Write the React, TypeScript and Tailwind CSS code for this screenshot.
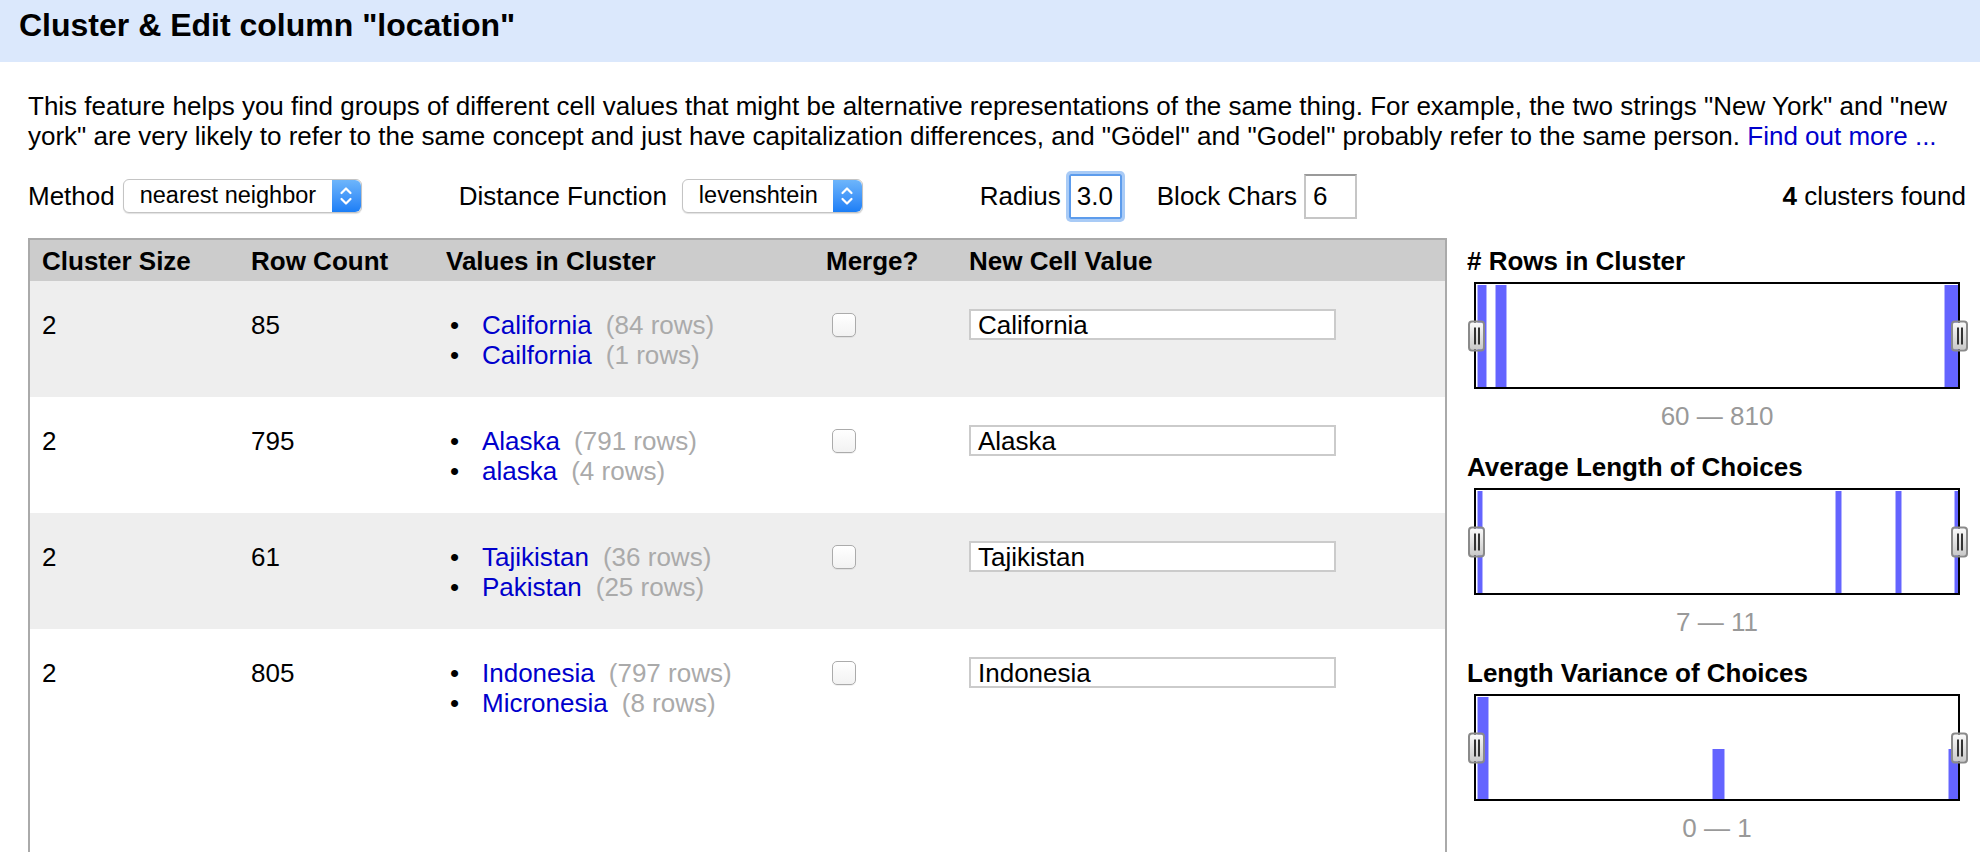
import React from "react";

type Cluster = {
  size: number;
  count: number;
  values: [string, number][];
  newValue: string;
};

const clusters: Cluster[] = [
  { size: 2, count: 85, values: [["California", 84], ["Cailfornia", 1]], newValue: "California" },
  { size: 2, count: 795, values: [["Alaska", 791], ["alaska", 4]], newValue: "Alaska" },
  { size: 2, count: 61, values: [["Tajikistan", 36], ["Pakistan", 25]], newValue: "Tajikistan" },
  { size: 2, count: 805, values: [["Indonesia", 797], ["Micronesia", 8]], newValue: "Indonesia" },
];

type Bar = { x: number; w: number; h: number };

const histograms: { title: string; range: string; bars: Bar[] }[] = [
  {
    title: "# Rows in Cluster",
    range: "60 — 810",
    bars: [
      { x: 2, w: 8, h: 1 },
      { x: 20, w: 10, h: 1 },
      { x: 469, w: 13, h: 1 },
    ],
  },
  {
    title: "Average Length of Choices",
    range: "7 — 11",
    bars: [
      { x: 2, w: 4, h: 1 },
      { x: 360, w: 5, h: 1 },
      { x: 420, w: 5, h: 1 },
      { x: 479, w: 3, h: 1 },
    ],
  },
  {
    title: "Length Variance of Choices",
    range: "0 — 1",
    bars: [
      { x: 2, w: 10, h: 1 },
      { x: 237, w: 11, h: 0.49 },
      { x: 473, w: 9, h: 0.49 },
    ],
  },
];

const Stepper = () => (
  <span className="flex w-[29px] items-center justify-center rounded-r-[6px] bg-linear-to-b from-[#6db5fb] to-[#1a7ef6]">
    <svg width="14" height="24" viewBox="0 0 14 24" fill="none" stroke="white" strokeWidth="2.2" strokeLinecap="round" strokeLinejoin="round">
      <path d="M2.5 9 L7 4.5 L11.5 9" />
      <path d="M2.5 15 L7 19.5 L11.5 15" />
    </svg>
  </span>
);

const Select = ({ value, className }: { value: string; className: string }) => (
  <div className={`flex h-[34px] items-stretch rounded-[6px] border border-[#c4c4c4] bg-white shadow-[0_1px_1px_rgba(0,0,0,0.12)] ${className}`}>
    <span className="flex flex-1 items-center pl-[16px] text-[23.5px] leading-none">{value}</span>
    <Stepper />
  </div>
);

const Handle = ({ side }: { side: "left" | "right" }) => (
  <div
    className={`absolute top-1/2 flex h-[31px] w-[17px] -translate-y-1/2 items-center justify-center gap-[2px] rounded-[4px] border-2 border-[#8a8a8a] bg-linear-to-b from-[#fafafa] to-[#c9c9c9] ${
      side === "left" ? "-left-[8px]" : "-right-[10px]"
    }`}
  >
    <span className="h-[17px] w-[2px] bg-[#333]" />
    <span className="h-[17px] w-[2px] bg-[#333]" />
  </div>
);

const Histogram = ({ bars }: { bars: Bar[] }) => (
  <div className="relative ml-[7px] h-[107px] w-[486px] border-2 border-black bg-white">
    <svg width="482" height="103" viewBox="0 0 482 103" className="block">
      {bars.map((b, i) => {
        const top = b.h === 1 ? 1 : Math.round(103 * (1 - b.h));
        return (
          <g key={i}>
            <rect x={b.x - 1} y={top} width={b.w + 2} height={103 - top} fill="#b3b3ff" />
            <rect x={b.x} y={top} width={b.w} height={103 - top} fill="#6464ff" />
          </g>
        );
      })}
    </svg>
    <Handle side="left" />
    <Handle side="right" />
  </div>
);

const cols = "grid grid-cols-[209px_195px_380px_143px_1fr] pl-[12px]";

export default function App() {
  return (
    <div className="flex h-[852px] w-[1980px] flex-col overflow-hidden bg-white font-['Liberation_Sans',Arial,sans-serif] text-[26px] leading-[30px] text-black">
      <div className="h-[62px] shrink-0 bg-[#dbe8fc] pl-[19px] pt-[7px]">
        <h1 className="text-[32px] font-bold leading-[37px]">Cluster &amp; Edit column "location"</h1>
      </div>

      <div className="flex min-h-0 flex-1 flex-col pl-[28px] pr-[14px]">
        <p className="mt-[29px]">
          This feature helps you find groups of different cell values that might be alternative representations of the
          same thing. For example, the two strings "New York" and "new york" are very likely to refer to the same concept
          and just have capitalization differences, and "Gödel" and "Godel" probably refer to the same person.{" "}
          <a className="text-[#0000cc]">Find out more ...</a>
        </p>

        <div className="mt-[22px] flex h-[46px] items-center">
          <span>Method</span>
          <Select value="nearest neighbor" className="ml-[8px] w-[239px]" />
          <span className="ml-[97px]">Distance Function</span>
          <Select value="levenshtein" className="ml-[15px] w-[181px]" />
          <span className="ml-[117px]">Radius</span>
          <div className="ml-[8px] flex h-[45px] w-[53px] items-center rounded-[2px] border-2 border-[#5d9cec] pl-[6px] shadow-[0_0_0_3px_#a9cbf6]">
            3.0
          </div>
          <span className="ml-[35px]">Block Chars</span>
          <div className="ml-[7px] flex h-[45px] w-[53px] items-center border-2 border-[#c6c6c6] border-t-[#9a9a9a] pl-[7px]">
            6
          </div>
          <span className="ml-auto">
            <b>4</b> clusters found
          </span>
        </div>

        <div className="mt-[19px] flex min-h-0 flex-1 gap-[20px]">
          <div className="flex w-[1419px] flex-col border-2 border-b-0 border-[#aaaaaa]">
            <div className={`${cols} h-[41px] shrink-0 items-center bg-[#cccccc] font-bold`}>
              <span>Cluster Size</span>
              <span>Row Count</span>
              <span>Values in Cluster</span>
              <span>Merge?</span>
              <span>New Cell Value</span>
            </div>
            {clusters.map((c, i) => (
              <div
                key={c.newValue}
                className={`${cols} ${i === clusters.length - 1 ? "flex-1" : "h-[116px]"} shrink-0 pt-[29px] ${
                  i % 2 === 0 ? "bg-[#eeeeee]" : "bg-white"
                }`}
              >
                <span>{c.size}</span>
                <span>{c.count}</span>
                <ul>
                  {c.values.map(([v, n]) => (
                    <li key={v} className="flex">
                      <span className="w-[36px] pl-[4px]">•</span>
                      <a className="text-[#0000cc]">{v}</a>
                      <span className="ml-[14px] text-[#aaaaaa]">({n} rows)</span>
                    </li>
                  ))}
                </ul>
                <span className="pl-[6px] pt-[3px]">
                  <span className="block h-[24px] w-[24px] rounded-[5px] border border-[#ababab] bg-linear-to-b from-white to-[#f2f2f2] shadow-[0_1px_0_rgba(0,0,0,0.06)]" />
                </span>
                <span>
                  <span className="-mt-[1px] flex h-[31px] w-[367px] items-center border-2 border-[#cbcbcb] bg-white pl-[7px]">
                    {c.newValue}
                  </span>
                </span>
              </div>
            ))}
          </div>

          <div className="flex flex-1 flex-col pt-[8px]">
            {histograms.map((h, i) => (
              <div key={h.title} className={i === 0 ? "" : "mt-[21px]"}>
                <h3 className="font-bold">{h.title}</h3>
                <div className="mt-[6px]">
                  <Histogram bars={h.bars} />
                </div>
                <div className="mt-[12px] ml-[7px] w-[486px] text-center text-[#999999]">{h.range}</div>
              </div>
            ))}
          </div>
        </div>
      </div>
    </div>
  );
}
